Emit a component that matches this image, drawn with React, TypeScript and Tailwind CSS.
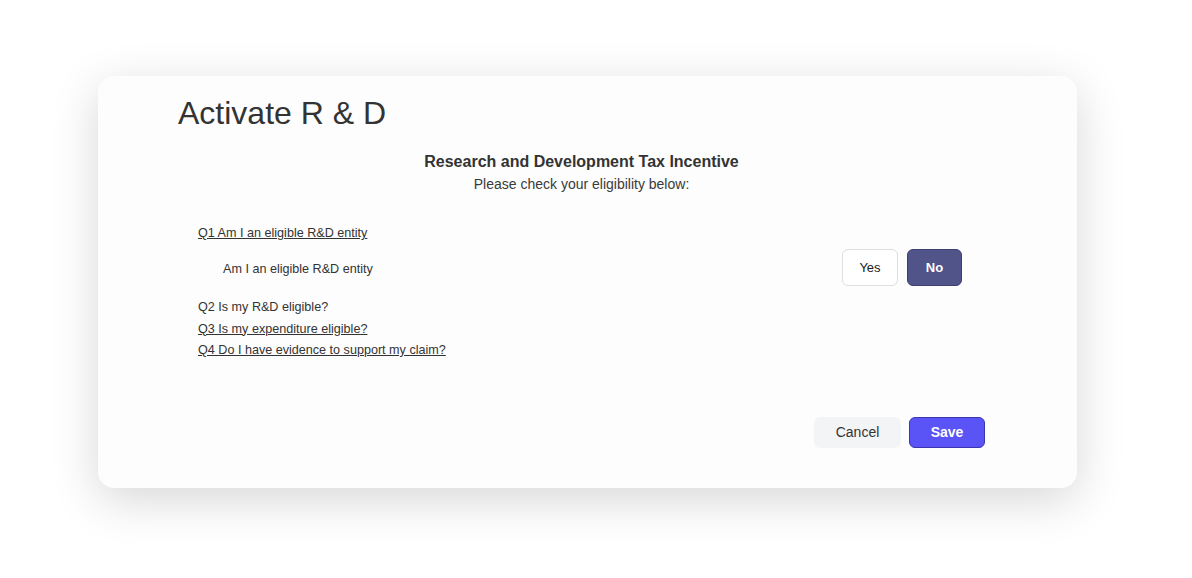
import React from "react";

export default function App() {
  const font = { fontFamily: '"Liberation Sans", Arial, sans-serif' };
  return (
    <div className="w-[1192px] h-[578px] bg-white pt-[76px] pl-[98px]" style={font}>
      <div className="w-[979px] h-[412px] bg-[#fdfdfd] rounded-[16px] shadow-[0_12px_48px_rgba(0,0,0,0.16)] pt-[19px] pl-[80px] pr-[92px] flex flex-col text-[#333333]">
        <h1 className="text-[32px] leading-[36px] text-[#333333]">Activate R &amp; D</h1>
        <div className="mt-[19px] flex flex-col items-center">
          <div className="text-[16px] leading-[24px] font-bold text-[#333333]">
            Research and Development Tax Incentive
          </div>
          <div className="text-[14px] leading-[20px] text-[#3a3a3a]">Please check your eligibility below:</div>
        </div>
        <div className="mt-[29px] pl-[20px] pr-[23px] text-[12.6px] text-[#333333] flex flex-col">
          <a className="underline leading-[21px] self-start cursor-pointer">Q1 Am I an eligible R&amp;D entity</a>
          <div className="mt-[5px] h-[37px] flex items-center justify-between pl-[25px]">
            <span className="pt-[4px]">Am I an eligible R&amp;D entity</span>
            <div className="flex items-center gap-[9px]">
              <button className="w-[56px] h-[37px] rounded-[6px] border border-[#dedede] bg-white text-[13px] text-[#222222]">
                Yes
              </button>
              <button className="w-[55px] h-[37px] rounded-[6px] border border-[#3d406f] bg-[#505489] text-[13px] font-bold text-white">
                No
              </button>
            </div>
          </div>
          <div className="mt-[11px] flex flex-col leading-[21.5px]">
            <span>Q2 Is my R&amp;D eligible?</span>
            <a className="underline self-start cursor-pointer">Q3 Is my expenditure eligible?</a>
            <a className="underline self-start cursor-pointer">Q4 Do I have evidence to support my claim?</a>
          </div>
        </div>
        <div className="mt-auto mb-[40px] flex justify-end gap-[8px]">
          <button className="w-[87px] h-[31px] rounded-[6px] bg-[#f3f4f6] text-[14px] text-[#333333]">Cancel</button>
          <button className="w-[76px] h-[31px] rounded-[6px] border border-[#3b36b0] bg-[#5a53f6] text-[14px] font-bold text-white">
            Save
          </button>
        </div>
      </div>
    </div>
  );
}
